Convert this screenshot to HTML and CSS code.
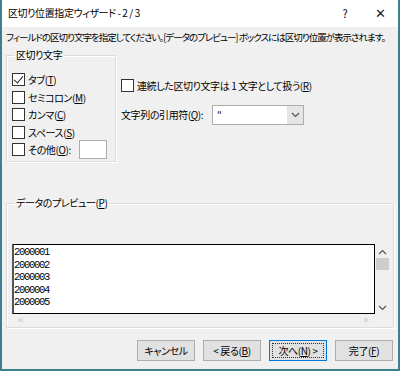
FILE: index.html
```html
<!DOCTYPE html>
<html>
<head>
    <meta charset="utf-8">
    <title>区切り位置指定ウィザード</title>
    <link rel="stylesheet" href="styles.css">
</head>
<body>
    <div class="window">
        <div class="titlebar">
            <span class="title">区切り位置指定ウィザード - 2 / 3</span>
            <span class="help">?</span>
            <span class="close">✕</span>
        </div>

        <div class="content">
            <p class="intro">フィールドの区切り文字を指定してください。[データのプレビュー] ボックスには区切り位置が表示されます。</p>

            <div class="options">
                <fieldset class="group delimiters">
                    <legend>区切り文字</legend>
                    <label class="check"><span class="box checked"></span>タブ(<u>T</u>)</label>
                    <label class="check"><span class="box"></span>セミコロン(<u>M</u>)</label>
                    <label class="check"><span class="box"></span>カンマ(<u>C</u>)</label>
                    <label class="check"><span class="box"></span>スペース(<u>S</u>)</label>
                    <label class="check"><span class="box"></span>その他(<u>O</u>):<span class="other-input"></span></label>
                </fieldset>

                <div class="side">
                    <label class="check"><span class="box"></span>連続した区切り文字は 1 文字として扱う(<u>R</u>)</label>
                    <div class="quote-row">
                        <span>文字列の引用符(<u>Q</u>):</span>
                        <div class="select">
                            <span class="select-value">"</span>
                            <span class="select-arrow">
                                <svg width="9" height="6" viewBox="0 0 9 6"><path d="M1 1 L4.5 4.5 L8 1" fill="none" stroke="#555" stroke-width="1.2"/></svg>
                            </span>
                        </div>
                    </div>
                </div>
            </div>

            <fieldset class="group preview">
                <legend>データのプレビュー(<u>P</u>)</legend>
                <div class="preview-area">
                    <div class="preview-box">
                        <div class="rows">
                            <div>2000001</div>
                            <div>2000002</div>
                            <div>2000003</div>
                            <div>2000004</div>
                            <div>2000005</div>
                        </div>
                        <div class="vscroll">
                            <svg class="arrow" width="9" height="6" viewBox="0 0 9 6"><path d="M1 5 L4.5 1.5 L8 5" fill="none" stroke="#555" stroke-width="1.2"/></svg>
                            <span class="thumb"></span>
                            <svg class="arrow down" width="9" height="6" viewBox="0 0 9 6"><path d="M1 1 L4.5 4.5 L8 1" fill="none" stroke="#555" stroke-width="1.2"/></svg>
                        </div>
                    </div>
                    <div class="hscroll">
                        <span>&lt;</span>
                        <span>&gt;</span>
                    </div>
                </div>
            </fieldset>

            <div class="buttons">
                <button>キャンセル</button>
                <button>&lt; 戻る(<u>B</u>)</button>
                <button class="default"><span class="focus">次へ(<u>N</u>) &gt;</span></button>
                <button>完了(<u>F</u>)</button>
            </div>
        </div>
    </div>
</body>
</html>
```

FILE: styles.css
```css
* {
    box-sizing: border-box;
}

body {
    margin: 0;
    font-family: "Noto Sans CJK JP", "Noto Sans", sans-serif;
    font-size: 10px;
    font-feature-settings: "palt";
    letter-spacing: -0.4px;
    color: #000;
    background: #fff;
}

.window {
    width: 400px;
    height: 371px;
    border: 2px solid #3d7f8c;
    border-top: none;
    display: flex;
    flex-direction: column;
    background: #f0f0f0;
    overflow: hidden;
}

.titlebar {
    height: 27px;
    background: #fff;
    display: flex;
    align-items: center;
    padding: 0 0 2px 6px;
    font-size: 10px;
    letter-spacing: -0.4px;
}

.title {
    flex: 1;
}

.help {
    width: 34px;
    text-align: center;
    font-size: 11px;
}

.close {
    width: 36px;
    text-align: center;
    font-size: 13px;
    color: #222;
}

.content {
    flex: 1;
    padding: 2px 4px 0 4px;
    display: flex;
    flex-direction: column;
}

.intro {
    margin: 0;
    height: 18px;
    line-height: 16px;
    font-size: 9.5px;
    letter-spacing: -1px;
    white-space: nowrap;
}

u {
    text-decoration: underline;
}

.group {
    border: 1px solid #dcdcdc;
    box-shadow: 1px 1px 0 #fff, inset 1px 1px 0 #fff;
    margin: 0;
    padding: 0;
}

.group legend {
    padding: 0 2px;
    margin-left: 2px;
    line-height: 12px;
}

.options {
    display: flex;
    height: 150px;
}

.delimiters {
    width: 110px;
    height: 113px;
    margin-top: 2px;
    padding: 10px 0 0 5px;
}

.check {
    display: flex;
    align-items: center;
    height: 17.5px;
}

.box {
    width: 13px;
    height: 13px;
    border: 1px solid #333;
    background: #fff;
    margin-right: 3px;
    position: relative;
}

.box.checked::after {
    content: "";
    position: absolute;
    left: 3px;
    top: 0px;
    width: 4px;
    height: 8px;
    border-right: 1.5px solid #222;
    border-bottom: 1.5px solid #222;
    transform: rotate(40deg);
}

.other-input {
    display: inline-block;
    width: 28px;
    height: 19px;
    margin-left: 8px;
    background: #fff;
    border: 1px solid #abadb3;
}

.side {
    padding: 30px 0 0 5px;
}

.quote-row {
    display: flex;
    align-items: center;
    margin-top: 10px;
}

.quote-row > span {
    width: 91px;
}

.select {
    width: 92px;
    height: 20px;
    border: 1px solid #adadad;
    background: #fff;
    display: flex;
}

.select-value {
    flex: 1;
    padding-left: 4px;
    line-height: 17px;
}

.select-arrow {
    width: 16px;
    background: #e5e5e5;
    display: flex;
    align-items: center;
    justify-content: center;
}

.preview {
    height: 131px;
    padding: 35px 4px 0 5px;
}

.preview-box {
    display: flex;
    height: 70px;
}

.rows {
    flex: 1;
    background: #fff;
    border: 1px solid #000;
    border-left: 2px solid #555;
    font-family: "Liberation Mono", monospace;
    font-size: 10.5px;
    letter-spacing: -1.3px;
    line-height: 12.6px;
    padding: 1px 0 0 0;
}

.vscroll {
    width: 14px;
    display: flex;
    flex-direction: column;
    align-items: center;
    background: #f0f0f0;
    padding: 5px 0 3px 0;
}

.vscroll .arrow {
    flex: none;
}

.vscroll .down {
    margin-top: auto;
}

.thumb {
    width: 13px;
    height: 12px;
    margin-top: 3px;
    background: #cdcdcd;
}

.hscroll {
    height: 12px;
    width: 362px;
    display: flex;
    justify-content: space-between;
    padding: 0 6px;
    color: #bbb;
    font-size: 9px;
    line-height: 12px;
}

.buttons {
    display: flex;
    justify-content: flex-end;
    gap: 8px;
    padding: 12px 1px 0 0;
}

button {
    width: 58px;
    height: 21px;
    background: #e1e1e1;
    border: 1px solid #adadad;
    font-family: inherit;
    font-size: 10px;
    font-feature-settings: "palt";
    letter-spacing: -0.4px;
    padding: 0;
    color: #000;
}

button.default {
    border-color: #0078d7;
    padding: 2px;
}

.focus {
    display: block;
    height: 100%;
    border: 1px dotted #333;
    line-height: 14px;
}
```
